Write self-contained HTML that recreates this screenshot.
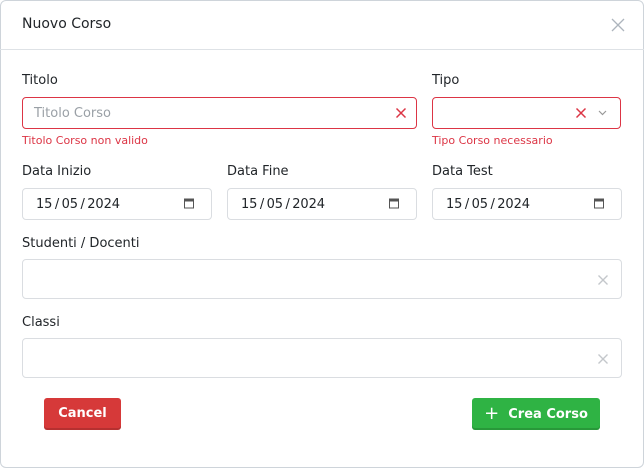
<!DOCTYPE html>
<html><head><meta charset="utf-8"><style>
*{box-sizing:border-box;margin:0;padding:0}
body{width:644px;height:468px;background:#fff;font-family:"DejaVu Sans","Liberation Sans",sans-serif;color:#212529;position:relative;overflow:hidden}
.modal{position:absolute;left:0;top:0;width:644px;height:468px;border:1px solid #ced4da;border-radius:6px}
.a{position:absolute}
.hdr{left:0;top:0;width:644px;height:50px;border-bottom:1px solid #dee2e6}
.t{font-size:14px;left:22px;top:16px}
.lbl{font-size:13px}
.inp{border:1px solid #dadde1;border-radius:4px;background:#fff}
.err{border-color:#dc3545}
.et{font-size:11px;color:#dc3545}
.date{font-size:13px;padding-left:13px;line-height:31px;letter-spacing:-0.1px}
.btn{border-radius:3px;color:#fff;font-weight:bold;font-size:13px;text-align:center;line-height:31px;box-shadow:inset 0 -2px 0 rgba(0,0,0,.15)}
</style></head><body>
<div class="modal"></div>
<div class="a hdr"></div>
<div class="a t">Nuovo Corso</div>
<svg class="a" style="left:611px;top:18px" width="14" height="14" viewBox="0 0 14 14"><path d="M1 1L13 13M13 1L1 13" stroke="#adb5bd" stroke-width="1.3"/></svg>

<div class="a lbl" style="left:22px;top:73px">Titolo</div>
<div class="a lbl" style="left:432px;top:73px">Tipo</div>
<div class="a inp err" style="left:22px;top:97px;width:395px;height:32px"></div>
<div class="a" style="left:34px;top:106px;font-size:13px;color:#9aa0a6">Titolo Corso</div>
<svg class="a" style="left:395px;top:107px" width="12" height="12" viewBox="0 0 12 12"><path d="M1.5 1.5L10.5 10.5M10.5 1.5L1.5 10.5" stroke="#dc3545" stroke-width="1.5"/></svg>
<div class="a inp err" style="left:432px;top:97px;width:189px;height:32px"></div>
<svg class="a" style="left:575px;top:107px" width="12" height="12" viewBox="0 0 12 12"><path d="M1.5 1.5L10.5 10.5M10.5 1.5L1.5 10.5" stroke="#dc3545" stroke-width="1.5"/></svg>
<svg class="a" style="left:597px;top:109px" width="11" height="8" viewBox="0 0 11 8"><path d="M2 2L5.5 5.5L9 2" stroke="#999" stroke-width="1.2" fill="none"/></svg>
<div class="a et" style="left:22px;top:134px">Titolo Corso non valido</div>
<div class="a et" style="left:432px;top:134px">Tipo Corso necessario</div>

<div class="a lbl" style="left:22px;top:164px">Data Inizio</div>
<div class="a lbl" style="left:227px;top:164px">Data Fine</div>
<div class="a lbl" style="left:432px;top:164px">Data Test</div>
<div class="a inp date" style="left:22px;top:188px;width:190px;height:32px">15&#8201;/&#8201;05&#8201;/&#8201;2024</div>
<div class="a inp date" style="left:227px;top:188px;width:190px;height:32px">15&#8201;/&#8201;05&#8201;/&#8201;2024</div>
<div class="a inp date" style="left:432px;top:188px;width:190px;height:32px">15&#8201;/&#8201;05&#8201;/&#8201;2024</div>
<svg class="a" style="left:183px;top:197px" width="12" height="12" viewBox="0 0 12 12"><rect x="1.5" y="2" width="9" height="9" fill="none" stroke="#555" stroke-width="1"/><rect x="1.5" y="2" width="9" height="2.5" fill="#555"/></svg>
<svg class="a" style="left:388px;top:197px" width="12" height="12" viewBox="0 0 12 12"><rect x="1.5" y="2" width="9" height="9" fill="none" stroke="#555" stroke-width="1"/><rect x="1.5" y="2" width="9" height="2.5" fill="#555"/></svg>
<svg class="a" style="left:593px;top:197px" width="12" height="12" viewBox="0 0 12 12"><rect x="1.5" y="2" width="9" height="9" fill="none" stroke="#555" stroke-width="1"/><rect x="1.5" y="2" width="9" height="2.5" fill="#555"/></svg>

<div class="a lbl" style="left:22px;top:236px">Studenti / Docenti</div>
<div class="a inp" style="left:22px;top:259px;width:600px;height:40px"></div>
<svg class="a" style="left:598px;top:275px" width="10" height="10" viewBox="0 0 10 10"><path d="M0.5 0.5L9.5 9.5M9.5 0.5L0.5 9.5" stroke="#c4c7cb" stroke-width="1.4"/></svg>
<div class="a lbl" style="left:22px;top:315px">Classi</div>
<div class="a inp" style="left:22px;top:338px;width:600px;height:40px"></div>
<svg class="a" style="left:598px;top:354px" width="10" height="10" viewBox="0 0 10 10"><path d="M0.5 0.5L9.5 9.5M9.5 0.5L0.5 9.5" stroke="#c4c7cb" stroke-width="1.4"/></svg>

<div class="a btn" style="left:44px;top:398px;width:77px;height:32px;background:#d63939;line-height:32px">Cancel</div>
<div class="a btn" style="left:472px;top:398px;width:128px;height:32px;background:#2fb344;line-height:32px"><span style="font-weight:normal;font-size:18px;vertical-align:-1px">+</span>&nbsp; Crea Corso</div>
</body></html>
